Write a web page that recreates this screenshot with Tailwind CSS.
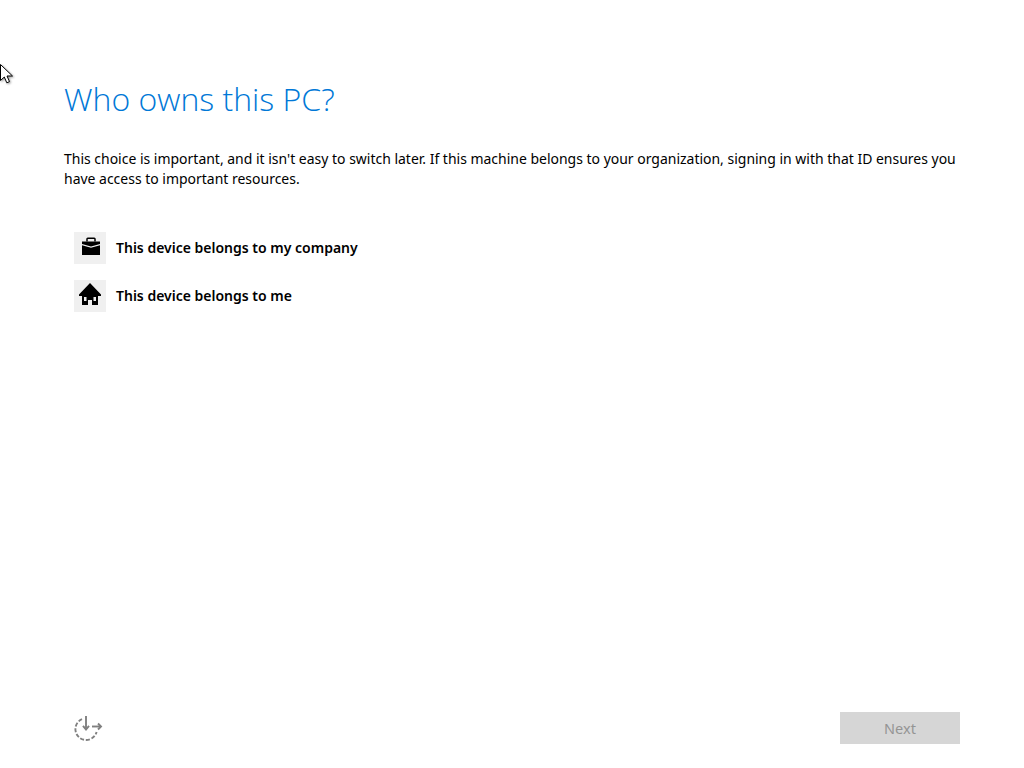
<!DOCTYPE html>
<html><head><meta charset="utf-8"><script src="https://cdn.jsdelivr.net/npm/@tailwindcss/browser@4"></script></head>
<body class="bg-white">
<div class="relative w-[1024px] h-[768px] overflow-hidden flex flex-col font-['Noto_Sans',sans-serif] text-black">
<svg class="absolute left-0 top-[64px] drop-shadow-[1px_1px_1px_rgba(0,0,0,0.4)]" width="14" height="20" viewBox="0 0 14 20"><path d="M0.5 0.5V16.5L4.3 13L6.8 18.8L9.5 17.6L7 12H12.5Z" fill="#fff" stroke="#000" stroke-width="1"/></svg>
<main class="flex-1 flex flex-col pl-[64px] pr-[64px] pt-[77px]">
<h1 class="text-[32px] leading-[44px] text-[#0078d7] font-light font-['Open_Sans',sans-serif]">Who owns this PC?</h1>
<p class="mt-[28px] text-[13.97px] leading-[20px] w-[896px]">This choice is important, and it isn't easy to switch later. If this machine belongs to your organization, signing in with that ID ensures you have access to important resources.</p>
<ul class="mt-[43px] ml-[10px] flex flex-col gap-[16px]">
<li class="flex items-center gap-[10px] h-[32px]"><span class="w-[32px] h-[32px] bg-[#f0f0f0] flex items-center justify-center"><svg width="32" height="32" viewBox="0 0 32 32"><path d="M13 9.5V7A.8.8 0 0 1 13.8 6.2H20.2A.8.8 0 0 1 21 7V9.5" fill="none" stroke="#000" stroke-width="1.5"/><path d="M8 9.5H26V12L17 14.5L8 12Z" fill="#000"/><path d="M8 13.2L17 15.8L26 13.2V23H8Z" fill="#000"/></svg></span><span class="text-[14px] font-semibold -mt-[2px]">This device belongs to my company</span></li>
<li class="flex items-center gap-[10px] h-[32px]"><span class="w-[32px] h-[32px] bg-[#f0f0f0] flex items-center justify-center"><svg width="32" height="32" viewBox="0 0 32 32"><path fill-rule="evenodd" d="M16 3L27 14.5V16H24V25H8V16H5V14.5ZM10 17V21H12.5V17ZM19.5 17V21H22V17ZM14 20V25H18V20Z" fill="#000"/></svg></span><span class="text-[14px] font-semibold -mt-[2px]">This device belongs to me</span></li>
</ul>
</main>
<footer class="flex items-center justify-between pl-[72px] pr-[64px] pb-[24px]">
<svg width="32" height="32" viewBox="0 0 32 32" fill="none" stroke="#808080" stroke-width="1.9"><path d="M10 7.2A10.8 10.8 0 1 0 24.6 20" stroke-dasharray="4 1.8"/><path d="M14 4V17.5"/><path d="M11 13.8L14 17.5L17 13.8"/><path d="M20 14.5H29"/><path d="M26 11.5L29 14.5L26 17.5"/></svg>
<button class="w-[120px] h-[32px] bg-[#d6d6d6] text-[#949494] text-[14.5px] pt-px">Next</button>
</footer>
</div>
</body></html>
